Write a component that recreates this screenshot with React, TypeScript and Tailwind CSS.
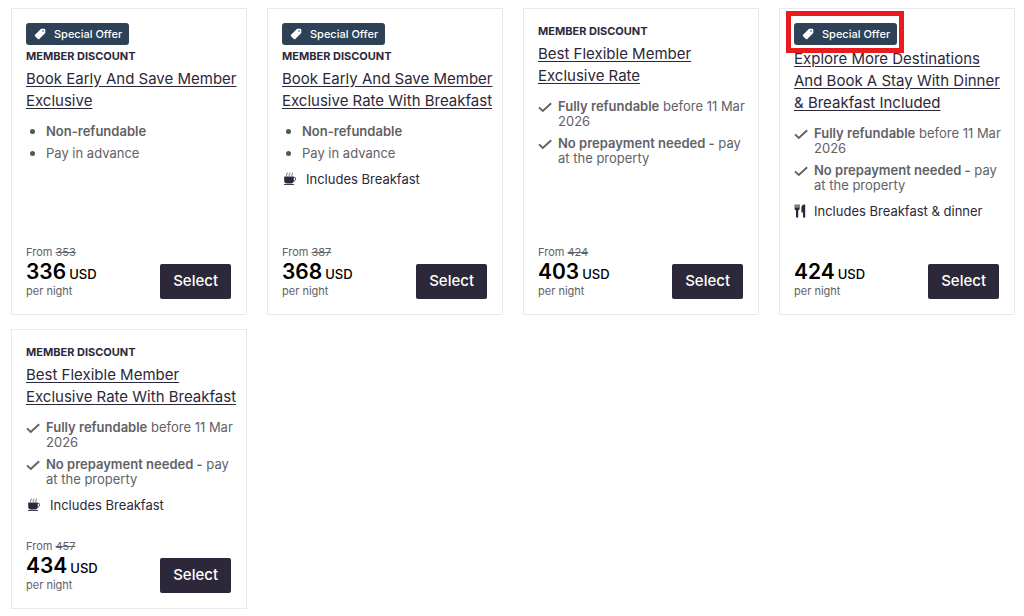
import { IoPricetag } from "react-icons/io5"

interface PerkProps {
   bold?: string
   text?: string
}

interface RateProps {
   title: string
   special?: boolean
   highlighted?: boolean
   member?: boolean
   refundable?: boolean
   meal?: "breakfast" | "dinner"
   oldPrice?: number
   price: number
}

const rates: RateProps[] = [
   {
      title: "Book Early And Save Member Exclusive",
      special: true,
      member: true,
      oldPrice: 353,
      price: 336
   },
   {
      title: "Book Early And Save Member Exclusive Rate With Breakfast",
      special: true,
      member: true,
      meal: "breakfast",
      oldPrice: 387,
      price: 368
   },
   {
      title: "Best Flexible Member Exclusive Rate",
      member: true,
      refundable: true,
      oldPrice: 424,
      price: 403
   },
   {
      title: "Explore More Destinations And Book A Stay With Dinner & Breakfast Included",
      special: true,
      highlighted: true,
      refundable: true,
      meal: "dinner",
      price: 424
   },
   {
      title: "Best Flexible Member Exclusive Rate With Breakfast",
      member: true,
      refundable: true,
      meal: "breakfast",
      oldPrice: 457,
      price: 434
   }
]

const flexiblePerks: PerkProps[] = [
   { bold: "Fully refundable", text: " before 11 Mar 2026" },
   { bold: "No prepayment needed -", text: " pay at the property" }
]

const advancePerks: PerkProps[] = [
   { bold: "Non-refundable" },
   { text: "Pay in advance" }
]

const CheckIcon = () => (
   <svg viewBox="0 0 14 14" className="mt-px size-[14px]" fill="none" stroke="currentColor" strokeWidth="1.9" aria-hidden="true">
      <path d="M1 7.4 4.8 11 13.2 3.2" />
   </svg>
)

const CoffeeIcon = () => (
   <svg viewBox="-1 0.6 14 14" className="size-[14px]" fill="none" stroke="currentColor" aria-hidden="true">
      <path d="M1.2 5.2h9.6v4a3 3 0 0 1-3 3H4.2a3 3 0 0 1-3-3z" fill="currentColor" stroke="none" />
      <path d="M10.6 6h.6a1.3 1.3 0 0 1 1.4 1.5c0 1.4-1 2.2-2.3 2.3" strokeWidth=".8" />
      <path d="M1 13.1h10" strokeWidth=".9" />
      <path d="M3.6 4.4c-.6-1.3 1.1-1.7.6-3.2M6.2 4.4c-.6-1.3 1.1-1.7.6-3.2M8.8 4.4c-.6-1.3 1.1-1.7.6-3.2" strokeWidth=".7" />
   </svg>
)

const CutleryIcon = () => (
   <svg viewBox="0 0 12 14" className="h-[14px] w-3" fill="currentColor" aria-hidden="true">
      <path d="M.6.4h1v3.4h.8V.4h1.2v3.4h.8V.4h1.2v4.1c0 1-.5 1.6-1.4 1.9v6.3a1.1 1.1 0 0 1-2.2 0V6.4C1.1 6.1.6 5.5.6 4.5z" />
      <path d="M11.2.8v11.9a1.1 1.1 0 0 1-2.2 0V8.4H7.4V3.7C7.4 1.8 8.7.4 10.3.4c.6 0 .9.1.9.4z" />
   </svg>
)

const SpecialOffer = ({ highlighted }: { highlighted?: boolean }) => (
   <div className="relative mb-[3px] flex h-[22px] w-fit items-center gap-2 rounded-[3px] bg-[#2d4257] pl-2 pr-[7px] text-[11px] font-medium text-white">
      <IoPricetag className="size-3" />
      Special Offer
      {highlighted && (
         <span className="absolute -bottom-2 -left-2 -right-[7px] -top-3 border-5 border-[#ea1b1f]" />
      )}
   </div>
)

const RateCard = ({
   title, special, highlighted, member, refundable, meal, oldPrice, price
}: RateProps) => {
   const perks = refundable ? flexiblePerks : advancePerks

   return (
      <article className="flex flex-col border border-[#e9e9ec] pb-[15px] pl-[14px] pr-[6px] pt-[14px]">
         {special && <SpecialOffer highlighted={highlighted} />}

         {member && (
            <p className="mb-1 text-[11px] font-bold leading-4">
               MEMBER DISCOUNT
            </p>
         )}

         <h2 className="text-[15px] leading-[22px]">
            <a href="#" className="underline underline-offset-2">{title}</a>
         </h2>

         <ul className="mt-3 flex flex-col gap-[7px] text-[13px] leading-[15px] text-[#626166]">
            {perks.map(({ bold, text }) => (
               <li key={bold ?? text} className="flex">
                  <span className="flex w-5 shrink-0">
                     {refundable
                        ? <CheckIcon />
                        : <span className="ml-1 mt-[5px] size-[5px] rounded-full bg-[#55535c]" />}
                  </span>
                  <p>
                     {bold && <strong className="font-semibold">{bold}</strong>}
                     {text}
                  </p>
               </li>
            ))}
         </ul>

         {meal && (
            <div className="mt-[11px] flex text-[13px] leading-[15px]">
               <span className={meal === "breakfast" ? "w-6 shrink-0" : "w-5 shrink-0"}>
                  {meal === "breakfast" ? <CoffeeIcon /> : <CutleryIcon />}
               </span>
               <p>{meal === "breakfast" ? "Includes Breakfast" : "Includes Breakfast & dinner"}</p>
            </div>
         )}

         <div className="mt-auto flex items-end justify-between pr-[9px] pt-[26px]">
            <div className="text-[11px] text-[#626166]">
               <p className="h-[14px] leading-[14px]">
                  {oldPrice && <>From <s>{oldPrice}</s></>}
               </p>
               <p className="flex h-[25px] items-baseline gap-[3px] text-[13px] font-medium leading-none text-black">
                  <span className="text-[21px] font-semibold leading-[25px]">{price}</span>
                  USD
               </p>
               <p className="leading-[15px]">per night</p>
            </div>
            <button type="button" className="h-[35px] rounded-xs bg-[#2d2839] px-[13px] text-[15px] font-medium text-white">
               Select
            </button>
         </div>
      </article>
   )
}

const App = () => (
   <main className="grid grid-cols-4 gap-x-5 gap-y-[14px] bg-white pb-2 pl-[11px] pr-[9px] pt-2 font-['Inter',sans-serif] text-[#2d2839]">
      {rates.map((rate) => (
         <RateCard key={rate.title} {...rate} />
      ))}
   </main>
)

export default App
